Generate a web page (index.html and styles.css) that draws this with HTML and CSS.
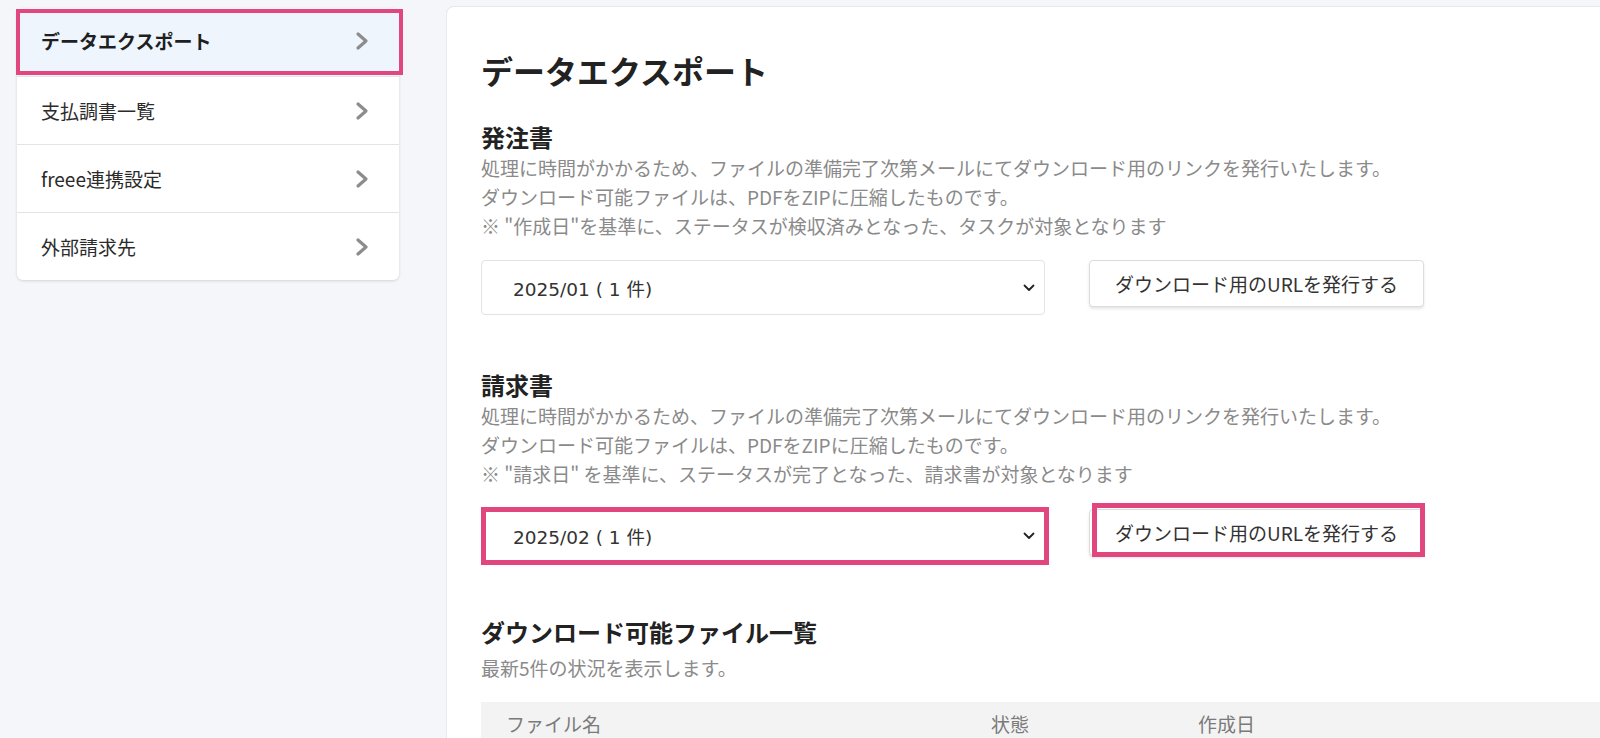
FILE: index.html
```html
<!DOCTYPE html>
<html lang="ja">
<head>
<meta charset="utf-8">
<title>データエクスポート</title>
<link rel="stylesheet" href="styles.css">
</head>
<body>
<div class="page">
  <nav class="sidebar">
    <a class="nav-item is-active mark mark-nav">
      <span>データエクスポート</span>
      <svg class="chev" viewBox="0 0 14 20" width="14" height="20"><polyline points="3,3 11,10 3,17" /></svg>
    </a>
    <a class="nav-item">
      <span>支払調書一覧</span>
      <svg class="chev" viewBox="0 0 14 20" width="14" height="20"><polyline points="3,3 11,10 3,17" /></svg>
    </a>
    <a class="nav-item">
      <span>freee連携設定</span>
      <svg class="chev" viewBox="0 0 14 20" width="14" height="20"><polyline points="3,3 11,10 3,17" /></svg>
    </a>
    <a class="nav-item">
      <span>外部請求先</span>
      <svg class="chev" viewBox="0 0 14 20" width="14" height="20"><polyline points="3,3 11,10 3,17" /></svg>
    </a>
  </nav>

  <main class="content">
    <h1 class="title">データエクスポート</h1>

    <section class="section">
      <h2 class="heading">発注書</h2>
      <p class="desc">処理に時間がかかるため、ファイルの準備完了次第メールにてダウンロード用のリンクを発行いたします。<br>ダウンロード可能ファイルは、PDFをZIPに圧縮したものです。<br>※ "作成日"を基準に、ステータスが検収済みとなった、タスクが対象となります</p>
      <div class="controls">
        <div class="select">
          <span class="select-text">2025/01 ( 1 件)</span>
          <svg class="select-chev" viewBox="0 0 12 8" width="12" height="8"><polyline points="1.5,1.5 6,6 10.5,1.5" /></svg>
        </div>
        <button class="btn">ダウンロード用のURLを発行する</button>
      </div>
    </section>

    <section class="section section-2">
      <h2 class="heading">請求書</h2>
      <p class="desc">処理に時間がかかるため、ファイルの準備完了次第メールにてダウンロード用のリンクを発行いたします。<br>ダウンロード可能ファイルは、PDFをZIPに圧縮したものです。<br>※ "請求日" を基準に、ステータスが完了となった、請求書が対象となります</p>
      <div class="controls">
        <div class="select mark mark-select">
          <span class="select-text">2025/02 ( 1 件)</span>
          <svg class="select-chev" viewBox="0 0 12 8" width="12" height="8"><polyline points="1.5,1.5 6,6 10.5,1.5" /></svg>
        </div>
        <button class="btn mark mark-btn">ダウンロード用のURLを発行する</button>
      </div>
    </section>

    <section class="section section-3">
      <h2 class="heading">ダウンロード可能ファイル一覧</h2>
      <p class="desc sub">最新5件の状況を表示します。</p>
      <div class="table-head">
        <div class="th">ファイル名</div>
        <div class="th">状態</div>
        <div class="th">作成日</div>
      </div>
    </section>
  </main>
</div>
</body>
</html>
```

FILE: styles.css
```css
* { box-sizing: border-box; }

html, body {
  margin: 0;
  padding: 0;
  background: #f5f6fa;
  font-family: "Noto Sans CJK JP", "Noto Sans", sans-serif;
  color: #333;
  overflow: hidden;
}

.page {
  display: flex;
  align-items: flex-start;
  gap: 47px;
  padding: 6px 0 0 17px;
  width: 1600px;
}

/* Sidebar */
.sidebar {
  width: 382px;
  flex: 0 0 382px;
  margin-top: 2px;
  background: #fff;
  border-radius: 6px;
  box-shadow: 0 1px 3px rgba(0, 0, 0, 0.14);
  display: flex;
  flex-direction: column;
}

.nav-item {
  height: 68px;
  display: flex;
  align-items: center;
  justify-content: space-between;
  padding: 0 30px 0 24px;
  font-size: 19px;
  line-height: 28px;
  color: #2b2b2b;
  border-top: 1px solid #e4e4e4;
}

.nav-item:first-child {
  border-top: none;
  border-radius: 6px 6px 0 0;
  padding-bottom: 3px;
}

.nav-item.is-active {
  background: #eef5fd;
  font-weight: 700;
  color: #1f1f1f;
}

.chev polyline {
  fill: none;
  stroke: #8c8c8c;
  stroke-width: 3.2;
  stroke-linecap: round;
  stroke-linejoin: round;
}

/* annotation frames */
.mark { position: relative; }
.mark::after {
  content: "";
  position: absolute;
  border: 5px solid #e2467f;
  pointer-events: none;
}
.mark-nav::after { left: -1px; right: -4px; top: 1px; bottom: 1px; border-width: 4px; }
.mark-select::after { left: -1px; right: -5px; top: -3px; bottom: -2px; }
.mark-btn::after { left: 2px; right: -2px; top: -7px; bottom: -2px; }

/* Main */
.content {
  flex: 1;
  background: #fff;
  border: 1px solid #e8e8ee;
  border-right: none;
  border-radius: 8px 0 0 0;
  padding: 41px 0 0 34px;
  min-height: 800px;
}

.title {
  margin: 0 0 27px;
  font-size: 32px;
  line-height: 45px;
  font-weight: 700;
  color: #222;
}

.heading {
  margin: 0;
  font-size: 24px;
  line-height: 34px;
  font-weight: 700;
  color: #222;
}

.desc {
  margin: 0;
  font-size: 19px;
  line-height: 28.8px;
  color: #8a8a8a;
}

.controls {
  display: flex;
  align-items: flex-start;
  gap: 44px;
  margin-top: 20px;
}

.select {
  width: 564px;
  height: 55px;
  border: 1px solid #e3e3e6;
  border-radius: 4px;
  background: #fff;
  display: flex;
  align-items: center;
  justify-content: space-between;
  padding: 0 9px 0 31px;
  font-size: 19px;
  color: #333;
}

.select-text {
  font-family: "DejaVu Sans", "Noto Sans CJK JP", sans-serif;
  font-size: 18.5px;
  color: #333;
}

.select-chev polyline {
  fill: none;
  stroke: #222;
  stroke-width: 1.8;
  stroke-linecap: round;
  stroke-linejoin: round;
}

.btn {
  width: 335px;
  height: 47px;
  background: #fff;
  border: 1px solid #dcdcdc;
  border-radius: 4px;
  box-shadow: 0 2px 3px rgba(0, 0, 0, 0.1);
  font-family: inherit;
  font-size: 19px;
  color: #333;
  padding: 0;
}

.section-2 { margin-top: 53px; }
.section-3 { margin-top: 51px; }

.sub { margin-top: 5px; }

.table-head {
  margin-top: 19px;
  background: #f3f3f3;
  display: grid;
  grid-template-columns: 485px 207px 1fr;
  padding: 8px 0 12px;
}

.th {
  padding-left: 25px;
  font-size: 19px;
  line-height: 28.5px;
  color: #7a7a7a;
}
```
